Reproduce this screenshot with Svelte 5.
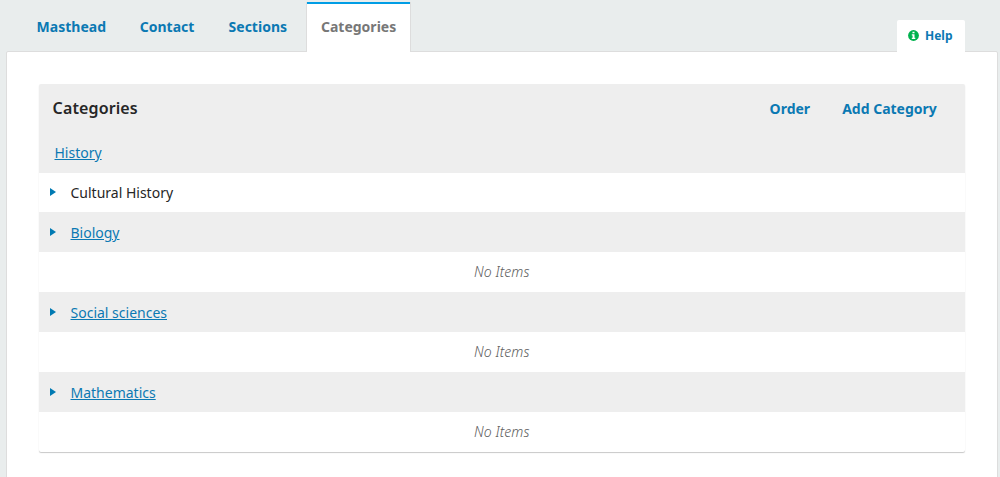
<script>
  const tabs = ['Masthead', 'Contact', 'Sections', 'Categories'];
  const current = 'Categories';
  const rows = [
    { label: 'History', kind: 'root' },
    { label: 'Cultural History', kind: 'plain' },
    { label: 'Biology', kind: 'group' },
    { label: 'No Items', kind: 'empty' },
    { label: 'Social sciences', kind: 'group' },
    { label: 'No Items', kind: 'empty' },
    { label: 'Mathematics', kind: 'group' },
    { label: 'No Items', kind: 'empty' }
  ];
</script>

<div class="page">
  <div class="bar">
    <nav class="tabs">
      {#each tabs as tab}
        <button class="tab {tab.toLowerCase()}" class:active={tab === current}>{tab}</button>
      {/each}
    </nav>
    <button class="help">
      <svg width="11" height="11" viewBox="0 0 11 11">
        <circle cx="5.5" cy="5.5" r="5.4" fill="#00b24e" />
        <path d="M4.5 1.8h2v1.5h-2zM3.8 4.2h2.7v3.5h.8v1.2H3.8V7.7h.8V5.4h-.8z" fill="#fff" />
      </svg>
      <span>Help</span>
    </button>
  </div>
  <main class="panel">
    <section class="grid">
      <header>
        <h4>Categories</h4>
        <div class="actions">
          <button class="order">Order</button>
          <button class="add">Add Category</button>
        </div>
      </header>
      {#each rows as row}
        <div class="row {row.kind}">
          {#if row.kind === 'plain' || row.kind === 'group'}
            <svg class="caret" width="6" height="8" viewBox="0 0 6 8"><path d="M0 0L6 4L0 8z" fill="#007ab2" /></svg>
          {/if}
          <span class="label">{row.label}</span>
        </div>
      {/each}
    </section>
  </main>
</div>

<style>
  :global(body) {
    margin: 0;
    overflow: hidden;
  }
  .page {
    box-sizing: border-box;
    height: 477px;
    padding: 2px 2px 0 6px;
    overflow: hidden;
    background: #e9eded;
    font-family: 'Noto Sans', sans-serif;
    font-size: 14px;
    line-height: 20px;
    color: #262626;
    display: flex;
    flex-direction: column;
  }
  button {
    border: 0;
    margin: 0;
    padding: 0;
    background: none;
    font: inherit;
    font-weight: 700;
    color: #0b79b3;
    white-space: nowrap;
  }
  .bar {
    display: flex;
    justify-content: space-between;
    align-items: flex-end;
    height: 50px;
    flex: none;
    margin-bottom: -1px;
    position: relative;
    z-index: 1;
  }
  .tabs {
    display: flex;
    height: 50px;
    padding-left: 15.6px;
  }
  .tab {
    box-sizing: border-box;
    flex: none;
    text-align: left;
    padding: 0 0 0 15px;
  }
  .masthead { width: 103.2px; }
  .contact { width: 88.8px; }
  .sections { width: 92.4px; }
  .tab.active {
    width: 105px;
    padding: 0 0 0 14px;
    border: 1px solid #ddd;
    border-width: 0 1px;
    background: linear-gradient(#009de5 2px, #fff 2px);
    color: #777;
  }
  .help {
    display: flex;
    align-items: center;
    gap: 6px;
    box-sizing: border-box;
    width: 68px;
    height: 32px;
    margin-right: 33px;
    padding: 0 0 0 11px;
    border-radius: 2px 2px 0 0;
    background: #fff;
    font-size: 12px;
  }
  .help svg {
    margin-bottom: 1px;
  }
  .panel {
    flex: 1 0 500px;
    box-sizing: border-box;
    width: 992px;
    padding: 32px;
    border: 1px solid #ddd;
    border-radius: 2px;
    background: #fff;
  }
  .grid {
    border-radius: 2px;
    width: 926px;
    overflow: hidden;
    box-shadow: 0 1px 1px rgba(0, 0, 0, 0.22);
  }
  header {
    display: flex;
    justify-content: space-between;
    align-items: center;
    height: 49px;
    padding: 0 28.2px 0 13.6px;
    background: #eee;
  }
  h4 {
    margin: 0 0 2px;
    font-size: 16px;
    font-weight: 600;
    letter-spacing: 0.12px;
  }
  .actions {
    display: flex;
    gap: 32px;
  }
  .row {
    display: flex;
    align-items: center;
    box-sizing: border-box;
    height: 40px;
    padding-left: 11px;
  }
  .row.plain { height: 39px; }
  .root, .group { background: #eee; }
  .row.root { padding-left: 15.5px; }
  .root .label, .group .label {
    color: #0b79b3;
    text-decoration: underline;
  }
  .group .label {
    margin-top: 2px;
  }
  .caret {
    flex: none;
    margin-right: 14.5px;
  }
  .plain .caret {
    margin-bottom: 1px;
  }
  .empty {
    justify-content: center;
    padding: 0 0.5px 0 0;
    font-style: italic;
    font-weight: 300;
    letter-spacing: 0.08px;
    color: #5c5c5c;
  }
</style>
